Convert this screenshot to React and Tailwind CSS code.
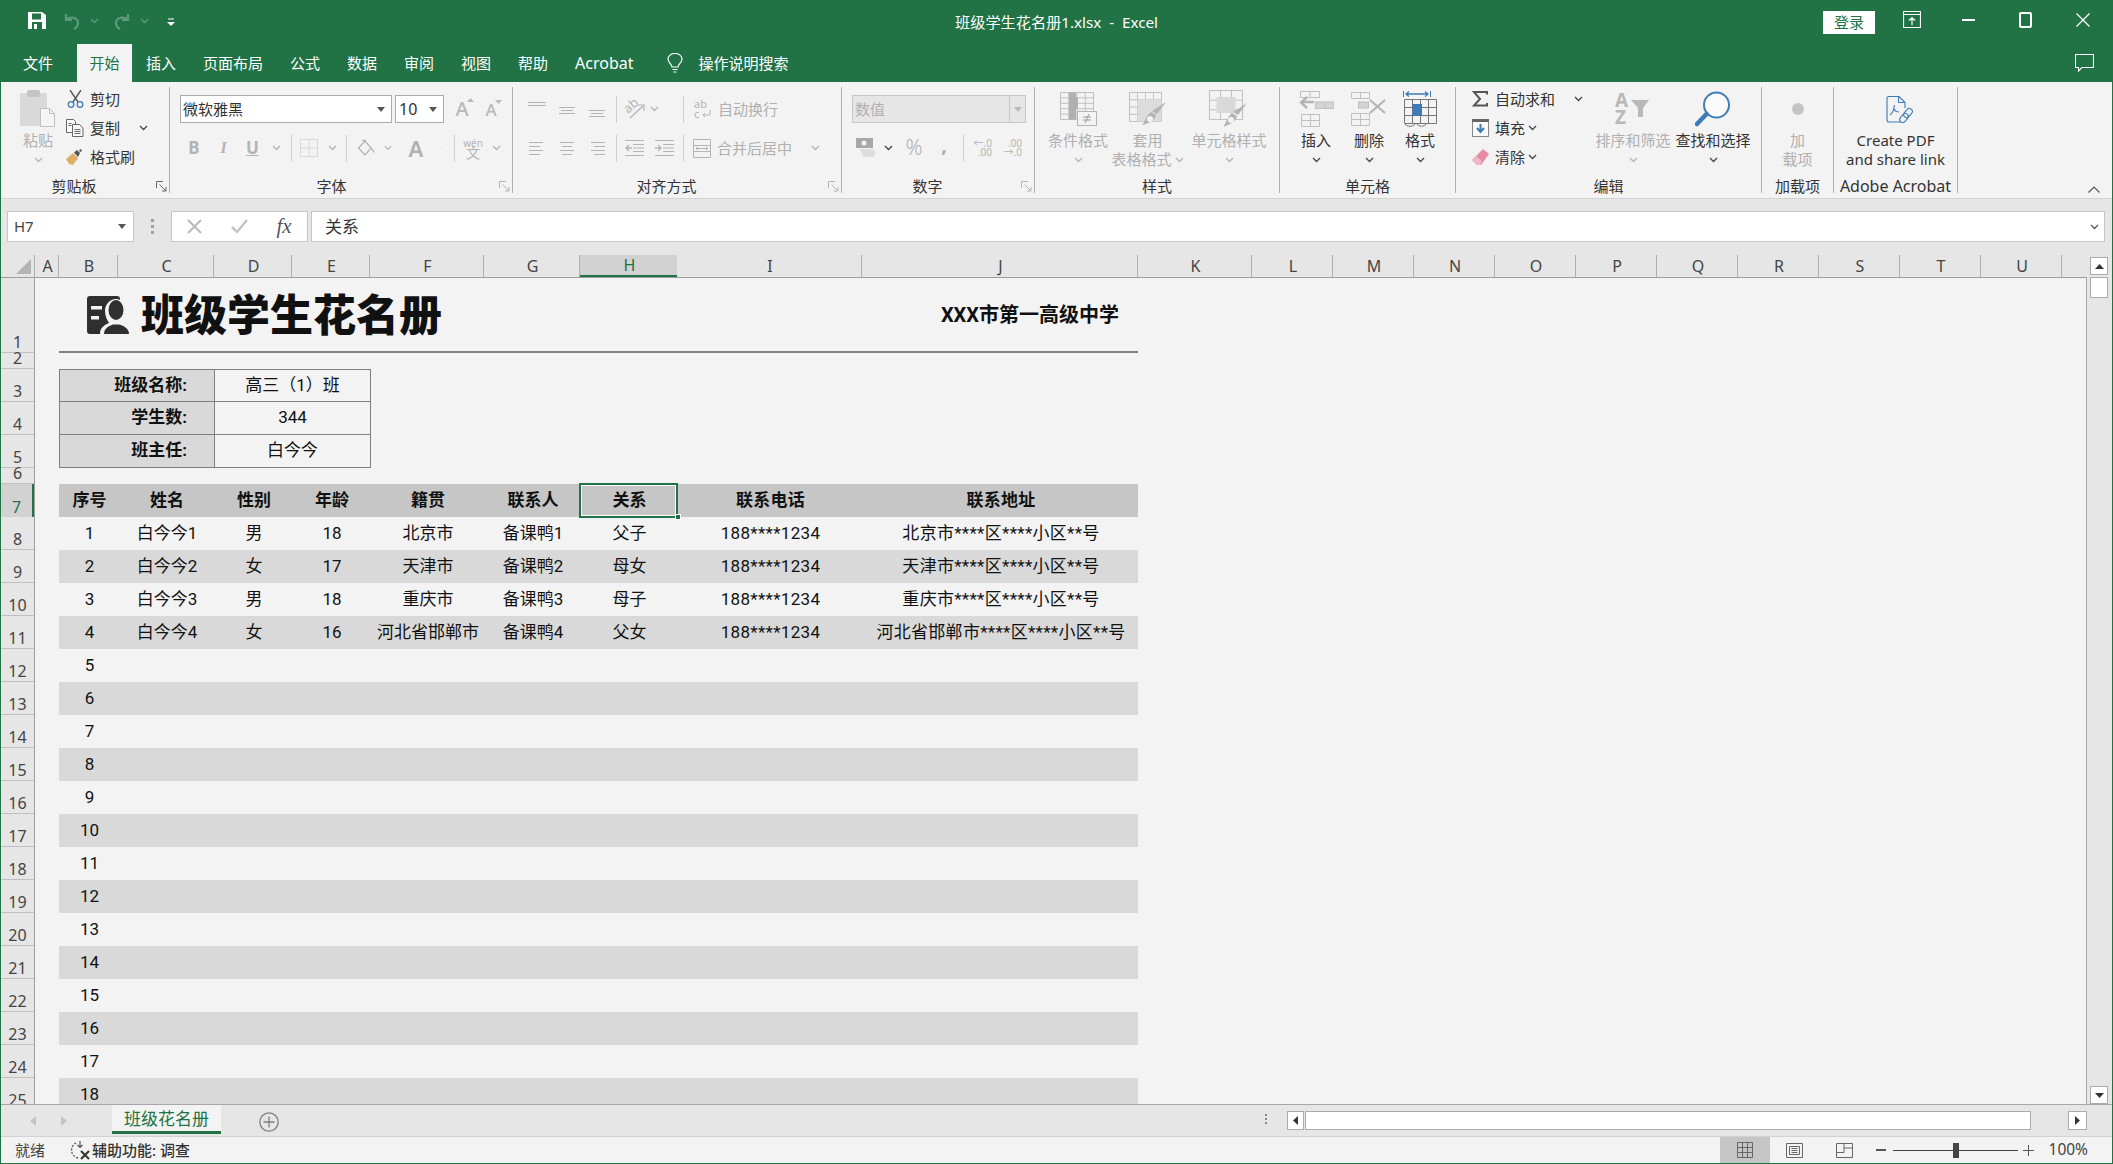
import React from 'react';

const GREEN = '#217346';
const COLS = [
  ['A', 'w-[24px]'], ['B', 'w-[59px]'], ['C', 'w-[96px]'], ['D', 'w-[78px]'], ['E', 'w-[78px]'],
  ['F', 'w-[114px]'], ['G', 'w-[96px]'], ['H', 'w-[97px]'], ['I', 'w-[185px]'], ['J', 'w-[276px]'],
  ['K', 'w-[114px]'], ['L', 'w-[81px]'], ['M', 'w-[81px]'], ['N', 'w-[81px]'], ['O', 'w-[81px]'],
  ['P', 'w-[81px]'], ['Q', 'w-[81px]'], ['R', 'w-[81px]'], ['S', 'w-[81px]'], ['T', 'w-[81px]'], ['U', 'w-[81px]'],
];
const TABLE_COLS = ['w-[59px]', 'w-[96px]', 'w-[78px]', 'w-[78px]', 'w-[114px]', 'w-[96px]', 'w-[97px]', 'w-[185px] tracking-[0.3px]', 'w-[276px] tracking-[0.3px]'];
const TABLE_HEAD = ['序号', '姓名', '性别', '年龄', '籍贯', '联系人', '关系', '联系电话', '联系地址'];
const STUDENTS = [
  ['1', '白今今1', '男', '18', '北京市', '备课鸭1', '父子', '188****1234', '北京市****区****小区**号'],
  ['2', '白今今2', '女', '17', '天津市', '备课鸭2', '母女', '188****1234', '天津市****区****小区**号'],
  ['3', '白今今3', '男', '18', '重庆市', '备课鸭3', '母子', '188****1234', '重庆市****区****小区**号'],
  ['4', '白今今4', '女', '16', '河北省邯郸市', '备课鸭4', '父女', '188****1234', '河北省邯郸市****区****小区**号'],
];
const ROW_HEIGHTS = [
  'h-[75px]', 'h-[16px]', 'h-[33px]', 'h-[33px]', 'h-[33px]', 'h-[16px]',
  ...Array(19).fill('h-[33px]'),
];

const S = ({ c = '', children }) => (
  <div className={`flex items-center justify-center shrink-0 ${c}`}>{children}</div>
);

const Chev = ({ color = '#b4b4b4' }) => (
  <svg width="9" height="6" viewBox="0 0 9 6" fill="none"><path d="M1 1l3.5 3.5L8 1" stroke={color} strokeWidth="1.3" /></svg>
);
const Caret = ({ color = '#555' }) => (
  <svg width="8" height="5" viewBox="0 0 8 5"><path d="M0 0h8L4 5z" fill={color} /></svg>
);
const Launcher = ({ color = '#b4b4b4' }) => (
  <svg className="absolute right-[2px] bottom-[1px]" width="11" height="11" viewBox="0 0 11 11" fill="none" stroke={color}>
    <path d="M.5 7V.5H7" /><path d="M3.5 3.5L10 10M10 6v4H6" />
  </svg>
);

const Lines = ({ rows, w = 18, color = '#b4b4b4' }) => (
  <svg width={w} height="20" viewBox={`0 0 ${w} 20`} stroke={color} fill="none">
    {rows.map((r, i) => <path key={i} d={`M${r[0]} ${r[2]}.5H${r[1]}`} />)}
  </svg>
);

const PasteIcon = () => (
  <svg width="36" height="38" viewBox="0 0 36 38">
    <rect x="0" y="3" width="27" height="33" rx="2" fill="#d9d9d9" />
    <rect x="7" y="0" width="13" height="7" rx="2" fill="#c4c4c4" />
    <path d="M20.5 18.5h9l5 5v13h-14z" fill="#f5f5f5" stroke="#c0c0c0" />
    <path d="M29.5 18.5v5h5" fill="none" stroke="#c0c0c0" />
  </svg>
);
const ScissorsIcon = () => (
  <svg width="17" height="18" viewBox="0 0 17 18" fill="none">
    <path d="M3 0l8 12M14 0L6 12" stroke="#555" strokeWidth="1.4" />
    <circle cx="4" cy="14.5" r="2.8" stroke="#3f7cb5" strokeWidth="1.3" />
    <circle cx="13" cy="14.5" r="2.8" stroke="#3f7cb5" strokeWidth="1.3" />
  </svg>
);
const CopyIcon = () => (
  <svg width="18" height="18" viewBox="0 0 18 18" fill="#f8f8f8" stroke="#666">
    <path d="M.5.5h7l2 2v11h-9z" />
    <path d="M6.5 5.5h7l3.5 3.5v8.5H6.5z" />
    <path d="M8.5 10.5h6M8.5 12.5h6M8.5 14.5h6M2.5 4.5h3M2.5 6.5h3" />
  </svg>
);
const BrushIcon = () => (
  <svg width="18" height="16" viewBox="0 0 18 16">
    <path d="M0 10l7-6 5 5-5 7-4-1z" fill="#dcb06b" />
    <path d="M8 3.5l3-2.5 3 3-2 4z" fill="#555" />
    <path d="M13 1l2-1 1 2-2 1z" fill="#555" />
  </svg>
);
const AGrow = ({ up }) => (
  <div className={`relative leading-none text-[#b8b8b8] font-medium ${up ? 'text-[20px]' : 'text-[17px]'}`}>
    A
    <svg className="absolute -top-[1px] -right-[5px]" width="7" height="4" viewBox="0 0 7 4">
      <path d={up ? 'M0 4h7L3.5 0z' : 'M0 0h7L3.5 4z'} fill="#b8b8b8" />
    </svg>
  </div>
);
const BorderIcon = () => (
  <svg width="18" height="18" viewBox="0 0 18 18" fill="none" stroke="#c0c0c0" strokeDasharray="1 1">
    <path d="M.5.5h17v17H.5zM9 .5v17M.5 9h17" />
  </svg>
);
const FillIcon = () => (
  <svg width="18" height="18" viewBox="0 0 18 18" fill="none" stroke="#b4b4b4" strokeWidth="1.2">
    <path d="M8 2L1.5 9l6.5 7 6-7z" />
    <path d="M8 2V.5M14 9c2 2 3 3.5 3 4.5" />
    <path d="M5 1.5h3" />
  </svg>
);
const OrientIcon = () => (
  <div className="relative w-[22px] h-[20px] text-[#b4b4b4]">
    <span className="absolute left-[0px] top-[0px] text-[13px] leading-[13px] -rotate-[42deg]">ab</span>
    <svg className="absolute left-0 top-0" width="22" height="20" viewBox="0 0 22 20" fill="none">
      <path d="M7 19L20 7M15 6h6v6" stroke="#b4b4b4" strokeWidth="1.2" />
    </svg>
  </div>
);
const IndentIcon = ({ left }) => (
  <svg width="19" height="16" viewBox="0 0 19 16" fill="none" stroke="#b4b4b4">
    <path d="M0 .5h19M8 4.5h11M8 8h11M8 11.5h11M0 15.5h19" />
    <path d={left ? 'M7 8H1M4 5L1 8l3 3' : 'M0 8h6M3 5l3 3-3 3'} strokeWidth="1.4" />
  </svg>
);
const WrapIcon = () => (
  <div className="relative w-[18px] h-[20px] text-[11px] leading-[10px] text-[#b4b4b4]">
    <div>ab</div>
    <div>c</div>
    <svg className="absolute left-0 top-0" width="18" height="20" viewBox="0 0 18 20" fill="none">
      <path d="M16 11v5H9M11 14l-2 2 2 2" stroke="#b4b4b4" />
    </svg>
  </div>
);
const MergeIcon = () => (
  <svg width="18" height="19" viewBox="0 0 18 19" fill="none" stroke="#b4b4b4">
    <path d="M.5.5h17v18H.5zM.5 6.5h17M.5 12.5h17" />
    <path d="M3 9.5h12M5 8L3 9.5 5 11M13 8l2 1.5L13 11" />
  </svg>
);
const CurrencyIcon = () => (
  <svg width="20" height="20" viewBox="0 0 20 20">
    <rect x="0" y="0" width="17" height="10" fill="#a8a8a8" />
    <circle cx="8" cy="5" r="2.5" fill="#f3f3f3" />
    <path d="M4 12h14M5 14h14M6 16h13M7 18h11" stroke="#c8c8c8" />
  </svg>
);
const DecimalIcon = ({ inc }) => (
  <div className="flex flex-col text-[10px] leading-[9px] text-[#b4b4b4] items-end w-[20px]">
    <span>{inc ? '←.0' : '.00'}</span>
    <span>{inc ? '.00' : '→.0'}</span>
  </div>
);

const Grid = ({ x, y, w, h, cols, rows, stroke = '#c0c0c0' }) => {
  const cw = w / cols;
  const rh = h / rows;
  let d = '';
  for (let i = 0; i <= cols; i++) d += `M${x + i * cw} ${y}V${y + h}`;
  for (let i = 0; i <= rows; i++) d += `M${x} ${y + i * rh}H${x + w}`;
  return <path d={d} stroke={stroke} fill="none" />;
};
const CondIcon = () => (
  <svg width="38" height="34" viewBox="0 0 38 34">
    <Grid x={1.5} y={.5} w={33} h={27} cols={4} rows={5} />
    <path d="M10 .5h7v5h2v11h-2v11h-7z" fill="#b0b0b0" />
    <rect x="18.5" y="19.5" width="19" height="14" fill="#f3f3f3" stroke="#b4b4b4" />
    <path d="M24 25h8M24 28h8M30 22l-4 9" stroke="#999" fill="none" />
  </svg>
);
const TableStyleIcon = () => (
  <svg width="38" height="34" viewBox="0 0 38 34">
    <Grid x={.5} y={.5} w={32} h={29} cols={4} rows={4} />
    <rect x="8.5" y="7.5" width="24" height="22" fill="#dcdcdc" />
    <path d="M37 10l-9 12-5-3z" fill="#b4b4b4" />
    <path d="M22 20l5 3c-1 5-5 8-14 10 3-3 4-9 9-13z" fill="#b4b4b4" />
    <circle cx="21" cy="27" r="3" fill="#f3f3f3" />
  </svg>
);
const CellStyleIcon = () => (
  <svg width="40" height="38" viewBox="0 0 40 38">
    <Grid x={.5} y={.5} w={33} h={29} cols={3} rows={3} />
    <rect x="7.5" y="7" width="19" height="16" fill="#d9d9d9" />
    <path d="M38 13l-9 12-5-3z" fill="#b4b4b4" />
    <path d="M23 23l5 3c-1 5-5 8-14 11 3-3 4-10 9-14z" fill="#b4b4b4" />
    <circle cx="22" cy="30" r="3" fill="#f3f3f3" />
  </svg>
);
const InsertIcon = () => (
  <svg width="36" height="36" viewBox="0 0 36 36">
    <Grid x={2.5} y={.5} w={19} h={6} cols={2} rows={1} />
    <Grid x={3.5} y={23.5} w={18} h={12} cols={2} rows={2} />
    <path d="M16 11H4M9 6l-6 5.500 6 5.500" stroke="#b4b4b4" strokeWidth="2.400" fill="none" />
    <rect x="17.500" y="11" width="18" height="6.500" fill="#d4d4d4" stroke="#c0c0c0" />
    <path d="M27 11v6.500" stroke="#c0c0c0" />
  </svg>
);
const DeleteIcon = () => (
  <svg width="36" height="34" viewBox="0 0 36 34">
    <Grid x={.5} y={.5} w={18} h={6} cols={2} rows={1} />
    <Grid x={.5} y={21.500} w={18} h={12} cols={2} rows={2} />
    <rect x="7.500" y="10" width="10" height="6" fill="#d4d4d4" stroke="#c0c0c0" />
    <path d="M19 8l15 13M34 8L19 21" stroke="#b4b4b4" strokeWidth="2.200" />
  </svg>
);
const FormatIcon = () => (
  <svg width="35" height="38" viewBox="0 0 35 38" fill="none">
    <path d="M.5 1v6M27.500 1v6" stroke="#3f7cb5" />
    <path d="M3 4h22M6 1.500L3 4l3 2.500M22 1.500L25 4l-3 2.500" stroke="#3f7cb5" strokeWidth="1.300" />
    <Grid x={1.5} y={9.500} w={32} h={24} cols={4} rows={3} stroke="#777" />
    <rect x="9.500" y="14" width="9.500" height="12" fill="#3f7cb5" />
    <path d="M2 34c2 3 8 3 10 0M14 34c2 3 7 3 9 0" stroke="#777" />
  </svg>
);
const SigmaIcon = () => (
  <svg width="16" height="16" viewBox="0 0 16 16" fill="none">
    <path d="M15 3.500V1H2l6 7-6 6.500h13V12" stroke="#555" strokeWidth="2" />
  </svg>
);
const FillDownIcon = () => (
  <svg width="17" height="18" viewBox="0 0 17 18">
    <rect x=".5" y=".5" width="16" height="17" fill="#fafafa" stroke="#888" />
    <rect x="0" y="0" width="17" height="3" fill="#666" />
    <path d="M8.500 5v7M5 9l3.500 4L12 9" stroke="#3f7cb5" strokeWidth="2" fill="none" />
  </svg>
);
const EraserIcon = () => (
  <svg width="17" height="16" viewBox="0 0 17 16">
    <path d="M11 0l6 5-8 11H5l-5-5z" fill="#e78aa4" />
    <path d="M0 11l4-4 6 5-2 4H5z" fill="#f0b6c6" />
  </svg>
);
const SortIcon = () => (
  <div className="relative w-[36px] h-[34px] text-[#b8b8b8] font-bold text-[19px] leading-[17px]">
    <div>A</div>
    <div>Z</div>
    <svg className="absolute left-[16px] top-[8px]" width="18" height="18" viewBox="0 0 18 18">
      <path d="M0 0h18l-6 8v9H7V8z" fill="#b8b8b8" />
    </svg>
  </div>
);
const FindIcon = () => (
  <svg width="36" height="36" viewBox="0 0 36 36" fill="none">
    <circle cx="21.500" cy="14" r="12.500" stroke="#3f7cb5" strokeWidth="2" fill="#fbfbfb" />
    <path d="M11.500 23L2 33" stroke="#3f7cb5" strokeWidth="4.500" strokeLinecap="round" />
  </svg>
);
const PdfIcon = () => (
  <svg width="27" height="30" viewBox="0 0 27 30" fill="none" stroke="#3f7cb5" strokeWidth="1.100">
    <path d="M15 26H3a2 2 0 0 1-2-2V2.500A2 2 0 0 1 3 .5h10l6 6V12" />
    <path d="M12.500 1v5.500H19" />
    <path d="M4 19c3-2 4-6 4.500-10M8 13c1 2 3 3 5 3" />
    <rect x="15" y="17" width="6" height="10" rx="3" transform="rotate(40 18 22)" />
    <rect x="19" y="12" width="6" height="10" rx="3" transform="rotate(40 22 17)" />
  </svg>
);
const FaceIcon = () => (
  <svg className="mt-[1px]" width="42" height="38" viewBox="0 0 42 38">
    <rect x="0" y="0" width="33" height="38" rx="3" fill="#2f2f2f" />
    <path d="M4 10h11v3.500H4zM4 20h8v3.500H4z" fill="#f3f3f3" />
    <path d="M13 38c0-7 5-9 9-11-2-3-4-7-4-12 0-7 5-12 11-12s11 5 11 12v23z" fill="#f3f3f3" />
    <ellipse cx="29" cy="14" rx="7.500" ry="10" fill="#2f2f2f" />
    <path d="M17 38c0-5 4-8 9-9.500h6c5 1.500 10 4 10 9.500z" fill="#2f2f2f" />
  </svg>
);

const BigBtn = ({ icon, w, lines, chevInline, disabled, chevColor }) => (
  <div className={`flex flex-col items-center shrink-0 ${w} ${disabled ? 'text-[#b0b0b0]' : 'text-[#333]'}`}>
    <div className="h-[44px] flex items-center justify-center">{icon}</div>
    {lines.map((l, i) => (
      <div key={i} className="h-[19px] leading-[19px] whitespace-nowrap flex items-center gap-[3px]">
        {l}{chevInline && i === lines.length - 1 ? <Chev /> : null}
      </div>
    ))}
    {!chevInline && lines.length === 1 && (
      <div className="h-[19px] flex items-center"><Chev color={chevColor || (disabled ? '#b4b4b4' : '#444')} /></div>
    )}
  </div>
);

const SmallBtn = ({ icon, label, disabled }) => (
  <div className={`flex items-center h-[24px] ${disabled ? 'text-[#b0b0b0]' : 'text-[#333]'}`}>
    <S c="w-[22px]">{icon}</S>
    <span className="ml-[4px] whitespace-nowrap">{label}</span>
  </div>
);

const Group = ({ w, label, launcher, launcherColor, children }) => (
  <div className={`relative h-[106px] mt-[5px] shrink-0 flex flex-col border-r border-[#b0b0b0] ${w}`}>
    <div className="h-[90px] flex">{children}</div>
    <div className="h-[16px] leading-[19px] text-center text-[#333] whitespace-nowrap">{label}</div>
    {launcher && <Launcher color={launcherColor} />}
  </div>
);

const Sep = ({ h = 'h-[27px]' }) => <div className={`w-px bg-[#d0d0d0] shrink-0 ${h}`} />;

function TitleBar() {
  return (
    <div className="h-[44px] grid grid-cols-[1fr_auto_1fr] items-center text-white">
      <div className="flex items-center pl-[27px] -mt-[3px]">
        <svg width="18" height="17" viewBox="0 0 18 17">
          <path d="M0 0h14l4 3v14H0z" fill="#fff" />
          <rect x="4" y="1.500" width="9" height="6" fill={GREEN} />
          <rect x="4" y="10" width="10" height="7" fill={GREEN} />
          <rect x="6" y="12" width="3" height="5" fill="#fff" />
        </svg>
        <svg className="ml-[17px]" width="18" height="18" viewBox="0 0 18 18" fill="none" stroke="#5c9a7b" strokeWidth="2.200">
          <path d="M3 2v6h6M3 8c3-4 12-3 12 3 0 3-2 5-4 6" />
        </svg>
        <S c="w-[10px] ml-[8px]"><Chev color="#5c9a7b" /></S>
        <svg className="ml-[14px]" width="18" height="18" viewBox="0 0 18 18" fill="none" stroke="#5c9a7b" strokeWidth="2.200">
          <path d="M15 2v6H9M15 8c-3-4-12-3-12 3 0 3 2 5 4 6" />
        </svg>
        <S c="w-[10px] ml-[8px]"><Chev color="#5c9a7b" /></S>
        <svg className="ml-[18px] mt-[3px]" width="8" height="8" viewBox="0 0 8 8">
          <path d="M1 1h6" stroke="#fff" /><path d="M0 4h8L4 8z" fill="#fff" />
        </svg>
      </div>
      <div className="text-[15.2px] whitespace-pre">班级学生花名册1.xlsx  -  Excel</div>
      <div className="flex justify-end items-center pr-[1px]">
        <div className="w-[52px] h-[23px] bg-white text-[15px] leading-[23px] text-center text-[#217346]">登录</div>
        <S c="w-[57px] ml-[8px] -mt-[5px]">
          <svg width="18" height="17" viewBox="0 0 18 17" fill="none" stroke="#fff" strokeWidth="1.200">
            <path d="M.5.5h17v16H.5zM.5 3.500h17M9 14V7M6 9.500L9 6.500l3 3" />
          </svg>
        </S>
        <S c="w-[57px] -mt-[5px]"><div className="w-[13px] h-[2px] bg-white" /></S>
        <S c="w-[57px] -mt-[5px]"><div className="w-[13px] h-[16px] rounded-[2px] border-2 border-white" /></S>
        <S c="w-[57px] -mt-[5px]">
          <svg width="14" height="14" viewBox="0 0 14 14" stroke="#fff" strokeWidth="1.300"><path d="M.5.5l13 13M13.500.5l-13 13" /></svg>
        </S>
      </div>
    </div>
  );
}

function MenuBar() {
  const tabs = ['插入', '页面布局', '公式', '数据', '审阅', '视图', '帮助'];
  return (
    <div className="h-[38px] flex text-white text-[15px] leading-[38px]">
      <div className="ml-[22px] w-[30px]">文件</div>
      <div className="ml-[24px] w-[55px] h-[38px] bg-[#f3f3f3] text-[#217346] text-center">开始</div>
      <div className="flex ml-[14px] gap-[27px]">
        {tabs.map(t => <div key={t} className="whitespace-nowrap">{t}</div>)}
        <div className="text-[16px]">Acrobat</div>
      </div>
      <div className="flex items-center ml-[33px] gap-[16px]">
        <svg width="16" height="20" viewBox="0 0 16 20" fill="none" stroke="#fff" strokeWidth="1.200">
          <path d="M5 14c0-3-4-4-4-8a7 5.500 0 0 1 14 0c0 4-4 5-4 8z" /><path d="M5.500 16.500h5M6.500 19h3" />
        </svg>
        <span className="whitespace-nowrap">操作说明搜索</span>
      </div>
      <div className="ml-auto mr-[18px] flex items-center">
        <svg width="19" height="18" viewBox="0 0 19 18" fill="none" stroke="#fff" strokeWidth="1.100">
          <path d="M.5.5h18v13H7l-3.500 3.500V13.500h-3z" />
        </svg>
      </div>
    </div>
  );
}

function Ribbon() {
  return (
    <div className="h-[117px] bg-[#f3f3f3] border-b border-[#d2d2d2] flex relative text-[15px]">
      <Group w="w-[169px]" label={<span className="-ml-[22px]">剪贴板</span>} launcher launcherColor="#666">
        <div className="ml-[14px] w-[46px] shrink-0 flex flex-col items-center text-[#b0b0b0]">
          <div className="h-[44px] pt-[3px]"><PasteIcon /></div>
          <div className="h-[19px] leading-[19px]">粘贴</div>
          <div className="h-[19px] flex items-center"><Chev /></div>
        </div>
        <div className="ml-[3px] flex flex-col gap-[5px]">
          <SmallBtn icon={<ScissorsIcon />} label="剪切" />
          <div className="flex items-center">
            <SmallBtn icon={<CopyIcon />} label="复制" />
            <S c="ml-[19px]"><Chev color="#444" /></S>
          </div>
          <SmallBtn icon={<BrushIcon />} label="格式刷" />
        </div>
      </Group>

      <Group w="w-[343px]" label={<span className="-ml-[19px]">字体</span>} launcher>
        <div className="ml-[10px] pt-[8px] flex flex-col">
          <div className="flex items-center h-[28px]">
            <div className="w-[212px] h-[28px] bg-white border border-[#ababab] flex items-center pl-[2px] pr-[6px] justify-between text-[#333]">
              <span>微软雅黑</span><Caret />
            </div>
            <div className="ml-[3px] w-[49px] h-[28px] bg-white border border-[#ababab] flex items-center pl-[3px] pr-[6px] justify-between text-[#333]">
              <span className="text-[16px]">10</span><Caret />
            </div>
            <S c="w-[30px] ml-[3px]"><AGrow up /></S>
            <S c="w-[28px]"><AGrow /></S>
          </div>
          <div className="flex items-center h-[26px] mt-[12px] text-[#b4b4b4]">
            <S c="w-[28px] text-[17px] font-bold">B</S>
            <S c="w-[31px] text-[17px] italic font-bold font-['Liberation_Serif',serif]">I</S>
            <S c="w-[27px] text-[17px] font-bold underline">U</S>
            <S c="w-[20px]"><Chev /></S>
            <div className="w-[5px]" /><Sep />
            <S c="w-[34px]"><BorderIcon /></S>
            <S c="w-[12px]"><Chev /></S>
            <div className="w-[8px]" /><Sep />
            <S c="w-[37px]"><FillIcon /></S>
            <S c="w-[8px]"><Chev /></S>
            <S c="w-[48px] text-[22px] font-semibold text-[#b0b0b0]">A</S>
            <S c="w-[2px]"><Chev /></S>
            <div className="w-[12px]" /><Sep />
            <S c="w-[36px]">
              <div className="flex flex-col items-center leading-[10px]">
                <span className="text-[10px]">wén</span><span className="text-[14px]">文</span>
              </div>
            </S>
            <S c="w-[10px]"><Chev /></S>
          </div>
        </div>
      </Group>

      <Group w="w-[329px]" label={<span className="-ml-[21px]">对齐方式</span>} launcher>
        <div className="ml-[9px] pt-[8px] flex flex-col">
          <div className="flex items-center h-[28px]">
            <S c="w-[30px]"><Lines rows={[[0, 18, 3], [0, 18, 6]]} /></S>
            <S c="w-[30px]"><Lines rows={[[1, 17, 8], [3, 15, 11], [1, 17, 14]]} /></S>
            <S c="w-[30px]"><Lines rows={[[1, 17, 11], [3, 15, 14], [1, 17, 17]]} /></S>
            <div className="w-[4px]" /><Sep />
            <S c="w-[31px] ml-[1px]"><OrientIcon /></S>
            <S c="w-[10px]"><Chev /></S>
            <div className="w-[24px]" /><Sep />
            <div className="ml-[8px]"><SmallBtn disabled icon={<WrapIcon />} label="自动换行" /></div>
          </div>
          <div className="flex items-center h-[26px] mt-[12px]">
            <S c="w-[30px]"><Lines rows={[[1, 15, 4], [1, 12, 8], [1, 15, 12], [1, 12, 16]]} /></S>
            <S c="w-[30px]"><Lines rows={[[2, 16, 4], [4, 14, 8], [2, 16, 12], [4, 14, 16]]} /></S>
            <S c="w-[30px]"><Lines rows={[[3, 17, 4], [6, 17, 8], [3, 17, 12], [6, 17, 16]]} /></S>
            <div className="w-[4px]" /><Sep />
            <S c="w-[30px] ml-[2px]"><IndentIcon left /></S>
            <S c="w-[30px]"><IndentIcon /></S>
            <div className="w-[4px]" /><Sep />
            <div className="ml-[7px]"><SmallBtn disabled icon={<MergeIcon />} label="合并后居中" /></div>
            <S c="w-[9px] ml-[19px]"><Chev /></S>
          </div>
        </div>
      </Group>

      <Group w="w-[193px]" label={<span className="-ml-[21px]">数字</span>} launcher>
        <div className="ml-[10px] pt-[8px] flex flex-col">
          <div className="w-[174px] h-[28px] bg-[#e6e6e6] border border-[#c6c6c6] flex items-center text-[#b0b0b0]">
            <span className="pl-[2px] flex-1">数值</span>
            <S c="w-[16px] h-full border-l border-[#c6c6c6]"><Caret color="#bbb" /></S>
          </div>
          <div className="flex items-center h-[26px] mt-[12px] text-[#b0b0b0]">
            <S c="w-[28px]"><CurrencyIcon /></S>
            <S c="w-[16px]"><Chev color="#444" /></S>
            <S c="w-[36px] text-[21px] font-light">%</S>
            <S c="w-[24px] text-[20px] font-bold leading-none -mt-[6px] text-[#aaa]">,</S>
            <div className="w-[7px]" /><Sep />
            <S c="w-[36px]"><DecimalIcon inc /></S>
            <S c="w-[24px]"><DecimalIcon /></S>
          </div>
        </div>
      </Group>

      <Group w="w-[245px]" label={<span>样式</span>}>
        <BigBtn w="w-[78px] ml-[4px]" disabled icon={<CondIcon />} lines={['条件格式']} />
        <BigBtn w="w-[73px] -ml-[6px]" disabled icon={<TableStyleIcon />} lines={['套用', '表格格式']} chevInline />
        <BigBtn w="w-[82px] ml-[4px]" disabled icon={<CellStyleIcon />} lines={['单元格样式']} />
      </Group>

      <Group w="w-[176px]" label={<span>单元格</span>}>
        <BigBtn w="w-[50px] ml-[11px]" icon={<InsertIcon />} lines={['插入']} />
        <BigBtn w="w-[50px] ml-[3px]" icon={<DeleteIcon />} lines={['删除']} />
        <BigBtn w="w-[50px] ml-[1px]" icon={<FormatIcon />} lines={['格式']} />
      </Group>

      <Group w="w-[306px]" label={<span>编辑</span>}>
        <div className="ml-[13px] w-[126px] shrink-0 flex flex-col gap-[5px]">
          <div className="flex items-center">
            <SmallBtn icon={<SigmaIcon />} label="自动求和" />
            <S c="ml-[19px]"><Chev color="#444" /></S>
          </div>
          <div className="flex items-center">
            <SmallBtn icon={<FillDownIcon />} label="填充" />
            <S c="ml-[3px]"><Chev color="#444" /></S>
          </div>
          <div className="flex items-center">
            <SmallBtn icon={<EraserIcon />} label="清除" />
            <S c="ml-[3px]"><Chev color="#444" /></S>
          </div>
        </div>
        <BigBtn w="w-[76px]" disabled icon={<SortIcon />} lines={['排序和筛选']} />
        <BigBtn w="w-[80px] ml-[2px]" icon={<FindIcon />} lines={['查找和选择']} />
      </Group>

      <Group w="w-[72px]" label={<span>加载项</span>}>
        <div className="w-full flex flex-col items-center text-[#b0b0b0]">
          <div className="h-[44px] flex items-center justify-center"><div className="w-[12px] h-[12px] rounded-full bg-[#c4c4c4] blur-[0.5px]" /></div>
          <div className="h-[19px] leading-[19px]">加</div>
          <div className="h-[19px] leading-[19px]">载项</div>
        </div>
      </Group>

      <Group w="w-[124px]" label={<span className="text-[16px]">Adobe Acrobat</span>}>
        <div className="w-full flex flex-col items-center text-[#333] whitespace-nowrap">
          <div className="h-[44px] flex items-center justify-center pl-[8px] pt-[4px]"><PdfIcon /></div>
          <div className="h-[19px] leading-[19px]">Create PDF</div>
          <div className="h-[19px] leading-[19px]">and share link</div>
        </div>
      </Group>

      <svg className="absolute right-[12px] bottom-[5px]" width="12" height="7" viewBox="0 0 12 7" fill="none" stroke="#555" strokeWidth="1.200">
        <path d="M.5 6.500L6 1l5.500 5.500" />
      </svg>
    </div>
  );
}

function FormulaBar() {
  return (
    <div className="h-[56px] pt-[12px] flex text-[15px] text-[#444] bg-[#e6e6e6]">
      <div className="ml-[6px] w-[127px] h-[31px] bg-white border border-[#c6c6c6] flex items-center justify-between pl-[6px] pr-[7px]">
        <span>H7</span><Caret />
      </div>
      <div className="w-[37px] h-[31px] flex flex-col items-center justify-center gap-[3px]">
        <div className="w-[3px] h-[3px] bg-[#a0a0a0]" />
        <div className="w-[3px] h-[3px] bg-[#a0a0a0]" />
        <div className="w-[3px] h-[3px] bg-[#a0a0a0]" />
      </div>
      <div className="w-[137px] h-[31px] bg-white border border-[#c6c6c6] flex items-center">
        <S c="w-[45px]">
          <svg width="15" height="15" viewBox="0 0 15 15" stroke="#b8b8b8" strokeWidth="2"><path d="M1 1l13 13M14 1L1 14" /></svg>
        </S>
        <S c="w-[45px]">
          <svg width="17" height="15" viewBox="0 0 17 15" fill="none" stroke="#c4c4c4" strokeWidth="2.500"><path d="M1 8l5 5L16 1" /></svg>
        </S>
        <S c="w-[44px] font-['Liberation_Serif',serif] italic text-[21px] text-[#555]">fx</S>
      </div>
      <div className="ml-[3px] w-[1794px] h-[31px] bg-white border border-[#c6c6c6] flex items-center justify-between pl-[13px] pr-[5px]">
        <span className="text-[17px] text-[#333]">关系</span>
        <Chev color="#555" />
      </div>
    </div>
  );
}

function ColHeaders() {
  return (
    <div className="h-[23px] flex bg-[#e6e6e6] border-b border-[#9d9d9d] text-[16px] text-[#444]">
      <div className="w-[34px] h-[22px] shrink-0 flex items-end justify-end pr-[3px] pb-[3px] border-r border-[#b0b0b0]">
        <div className="w-0 h-0 border-l-[15px] border-l-transparent border-b-[15px] border-b-[#b4b4b4]" />
      </div>
      {COLS.map(([name, w]) => (
        <div
          key={name}
          className={`${w} h-[22px] shrink-0 pl-[2px] flex items-center justify-center leading-none ${name === 'H' ? 'bg-[#d2d2d2] text-[#217346] border-b-2 border-[#217346]' : 'border-r border-[#b0b0b0]'}`}
        >
          {name}
        </div>
      ))}
    </div>
  );
}

function RowHeaders() {
  return (
    <div className="w-[34px] shrink-0 bg-[#e6e6e6] border-r border-[#9d9d9d] text-[16px] text-[#444]">
      {ROW_HEIGHTS.map((h, i) => (
        <div
          key={i}
          className={`${h} flex items-end justify-center leading-[20px] ${i === 6 ? 'bg-[#d2d2d2] text-[#217346] border-r-2 border-[#217346]' : 'border-b border-[#c0c0c0]'}`}
        >
          {i + 1}
        </div>
      ))}
    </div>
  );
}

function Row({ cells, fill, bold, selected }) {
  return (
    <div className={`h-[33px] flex ml-[24px] text-[17px] text-[#111] w-[1079px] ${fill} ${bold ? 'font-bold' : ''}`}>
      {TABLE_COLS.map((w, i) => (
        <div key={i} className={`${w} shrink-0 pl-[2px] relative flex items-center justify-center whitespace-nowrap`}>
          {cells[i]}
          {selected && i === 6 && (
            <>
              <div className="absolute -left-[1px] -top-[1px] -right-[1px] -bottom-[1px] border-2 border-[#217346] outline outline-1 -outline-offset-3 outline-white" />
              <div className="absolute -right-[4px] -bottom-[3px] w-[6px] h-[6px] bg-[#217346] border border-white" />
            </>
          )}
        </div>
      ))}
    </div>
  );
}

function SheetBody() {
  const info = [['班级名称:', '高三（1）班'], ['学生数:', '344'], ['班主任:', '白今今']];
  const empty = Array.from({ length: 14 }, (_, i) => i + 5);
  return (
    <div className="flex-1 min-w-0 font-['Roboto','Noto_Sans_CJK_SC',sans-serif]">
      <div className="h-[75px] ml-[24px] w-[1079px] border-b-2 border-[#7f7f7f] flex items-center pl-[28px]">
        <FaceIcon />
        <div className="ml-[12px] mt-[4px] text-[43px] leading-none font-black text-[#111] whitespace-nowrap">班级学生花名册</div>
        <div className="ml-auto pr-[19px] text-[20px] font-bold text-[#111] whitespace-nowrap">XXX市第一高级中学</div>
      </div>
      <div className="h-[16px]" />
      {info.map(([label, value], i) => (
        <div key={label} className={`h-[33px] ml-[24px] flex w-[312px] border-x border-b border-[#7f7f7f] text-[17px] text-[#111] ${i === 0 ? 'border-t' : ''}`}>
          <div className="w-[155px] bg-[#d9d9d9] border-r border-[#7f7f7f] flex items-center justify-end pr-[27px] font-bold">{label}</div>
          <div className="flex-1 flex items-center justify-center">{value}</div>
        </div>
      ))}
      <div className="h-[16px]" />
      <Row cells={TABLE_HEAD} fill="bg-[#c6c6c6]" bold selected />
      {STUDENTS.map((s, i) => (
        <Row key={s[0]} cells={s} fill={i % 2 ? 'bg-[#d9d9d9]' : ''} />
      ))}
      {empty.map(n => (
        <Row key={n} cells={[n]} fill={n % 2 ? '' : 'bg-[#d9d9d9]'} />
      ))}
    </div>
  );
}

function VScroll() {
  return (
    <div className="w-[25px] shrink-0 bg-[#e6e6e6] pl-[3px] pt-[2px] flex flex-col">
      <div className="w-[18px] h-[18px] bg-white border border-[#ababab] flex items-center justify-center">
        <svg width="9" height="5" viewBox="0 0 9 5"><path d="M0 5h9L4.500 0z" fill="#333" /></svg>
      </div>
      <div className="w-[18px] h-[21px] mt-[2px] bg-white border border-[#ababab]" />
      <div className="flex-1" />
      <div className="w-[18px] h-[18px] bg-white border border-[#ababab] flex items-center justify-center">
        <svg width="9" height="5" viewBox="0 0 9 5"><path d="M0 0h9L4.500 5z" fill="#333" /></svg>
      </div>
    </div>
  );
}

function SheetTabs() {
  return (
    <div className="h-[33px] bg-[#e6e6e6] border-t border-[#a6a6a6] border-b-[#d2d2d2] border-b flex items-start">
      <svg className="ml-[29px] mt-[11px]" width="6" height="10" viewBox="0 0 6 10"><path d="M6 0v10L0 5z" fill="#c4c4c4" /></svg>
      <svg className="ml-[25px] mt-[11px]" width="6" height="10" viewBox="0 0 6 10"><path d="M0 0v10l6-5z" fill="#c4c4c4" /></svg>
      <div className="ml-[45px] w-[109px] h-[29px] bg-[#f3f3f3] border-b-[3px] border-[#217346] text-[17px] text-[#217346] leading-[27px] text-center whitespace-nowrap">班级花名册</div>
      <svg className="ml-[38px] mt-[7px]" width="20" height="20" viewBox="0 0 20 20" fill="none" stroke="#808080" strokeWidth="1.300">
        <circle cx="10" cy="10" r="9.200" /><path d="M10 4.500v11M4.500 10h11" />
      </svg>
      <div className="ml-[986px] mt-[9px] flex flex-col gap-[2px]">
        <div className="w-[2px] h-[2px] bg-[#888]" />
        <div className="w-[2px] h-[2px] bg-[#888]" />
        <div className="w-[2px] h-[2px] bg-[#888]" />
      </div>
      <div className="ml-[20px] mt-[6px] w-[17px] h-[19px] bg-white border border-[#ababab] flex items-center justify-center">
        <svg width="5" height="9" viewBox="0 0 5 9"><path d="M5 0v9L0 4.500z" fill="#333" /></svg>
      </div>
      <div className="ml-[1px] mt-[6px] w-[726px] h-[19px] bg-white border border-[#ababab]" />
      <div className="ml-[37px] mt-[6px] w-[19px] h-[19px] bg-white border border-[#ababab] flex items-center justify-center">
        <svg width="5" height="9" viewBox="0 0 5 9"><path d="M0 0v9l5-4.500z" fill="#333" /></svg>
      </div>
    </div>
  );
}

function StatusBar() {
  return (
    <div className="h-[26px] bg-[#f3f3f3] flex items-center text-[15px] text-[#444]">
      <span className="ml-[14px]">就绪</span>
      <svg className="ml-[25px]" width="20" height="20" viewBox="0 0 20 20" fill="none" stroke="#555">
        <path d="M6 3a8 8 0 0 0 2 15" strokeWidth="1.300" strokeDasharray="2 1.500" />
        <path d="M10 1v6M7.500 5L10 7.500 12.500 5" strokeWidth="1.200" />
        <path d="M11 11l8 8M19 11l-8 8" strokeWidth="2" stroke="#333" />
      </svg>
      <span className="ml-[2px] font-medium text-[#333] whitespace-nowrap">辅助功能: 调查</span>
      <div className="ml-auto flex items-center h-full">
        <S c="w-[50px] h-full bg-[#c6c6c6]">
          <svg width="16" height="16" viewBox="0 0 16 16" fill="none" stroke="#666">
            <path d="M.5.5h15v15H.5zM5.500.5v15M10.500.5v15M.5 5.500h15M.5 10.500h15" />
          </svg>
        </S>
        <S c="w-[50px]">
          <svg width="17" height="15" viewBox="0 0 17 15" fill="none" stroke="#666">
            <path d="M.5.5h16v14H.5zM3.500 3.500h10v8h-10zM5.500 5.500h6M5.500 7.500h6M5.500 9.500h6" />
          </svg>
        </S>
        <S c="w-[50px]">
          <svg width="17" height="15" viewBox="0 0 17 15" fill="none" stroke="#666">
            <path d="M.5.500h16v14H.5zM.5 9.500h7.500V.5M8 5h8.500" />
          </svg>
        </S>
        <div className="w-[10px] h-[1.500px] bg-[#555] ml-[6px]" />
        <div className="relative w-[125px] h-px bg-[#444] ml-[7px]">
          <div className="absolute left-[60px] -top-[7px] w-[6px] h-[15px] bg-[#444]" />
        </div>
        <svg className="ml-[5px]" width="11" height="11" viewBox="0 0 11 11" stroke="#555"><path d="M5.500 0v11M0 5.500h11" /></svg>
        <span className="ml-[15px] mr-[24px] text-[15.500px] whitespace-nowrap">100%</span>
      </div>
    </div>
  );
}

export default function App() {
  return (
    <div className="w-[2113px] h-[1164px] overflow-hidden flex flex-col bg-[#217346] border-x border-b border-[#217346] font-['Noto_Sans','Noto_Sans_CJK_SC',sans-serif]">
      <TitleBar />
      <MenuBar />
      <Ribbon />
      <FormulaBar />
      <div className="h-[849px] flex bg-[#f3f3f3]">
        <div className="w-[2086px] shrink-0 flex flex-col">
          <ColHeaders />
          <div className="flex-1 min-h-0 flex overflow-hidden border-r border-[#a6a6a6]">
            <RowHeaders />
            <SheetBody />
          </div>
        </div>
        <VScroll />
      </div>
      <SheetTabs />
      <StatusBar />
    </div>
  );
}
